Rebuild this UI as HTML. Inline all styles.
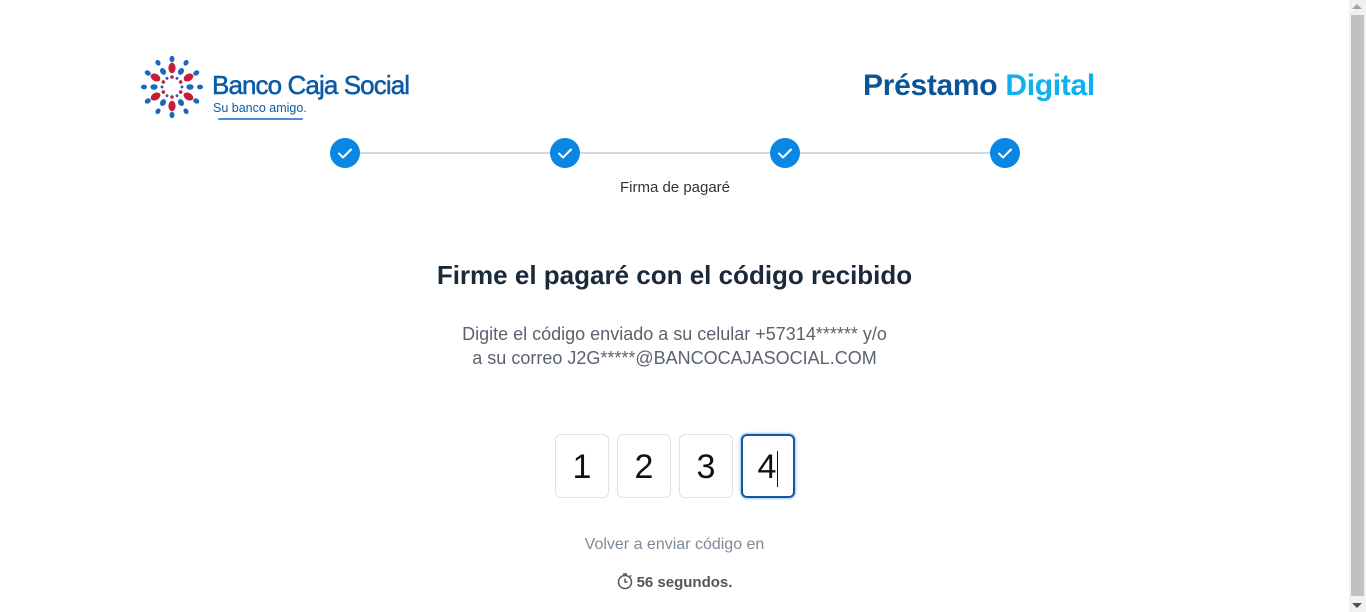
<!DOCTYPE html>
<html><head><meta charset="utf-8"><style>
*{margin:0;padding:0;box-sizing:border-box}
body{width:1366px;height:612px;background:#fff;font-family:"Liberation Sans",Roboto,sans-serif;position:relative;overflow:hidden}
.abs{position:absolute}
.sb{left:1349px;top:0;width:17px;height:612px;background:#f1f1f1}
.thumb{left:1351px;top:15px;width:13px;height:581px;background:#c1c1c1}
.step{width:30px;height:30px;border-radius:50%;background:#0a87e3;top:138px}
.line{top:152px;height:2px;background:#d5d8e2;left:360px;width:630px}
.c{text-align:center;width:1349px;left:0}
.box{top:434px;width:54px;height:64px;border:1px solid #dde2ea;border-radius:6px;font-size:34px;color:#111;text-align:center;line-height:64px}
</style></head><body>
<svg class="abs" style="left:136px;top:52px" width="72" height="70" viewBox="-36 -35 72 70">
<defs>
<g id="r"><ellipse cx="0" cy="-28" rx="2.5" ry="3.2" fill="#1a68c0"/><ellipse cx="0" cy="-19" rx="3.6" ry="5.2" fill="#c41f3a"/><circle cx="0" cy="-10" r="1.8" fill="#c41f3a"/></g>
<g id="b"><ellipse cx="0" cy="-28" rx="2.4" ry="3" fill="#1a68c0"/><ellipse cx="0" cy="-18" rx="2.8" ry="3.6" fill="#1a68c0"/><circle cx="0" cy="-10" r="1.5" fill="#1a68c0"/></g>
</defs>
<use href="#r"/><use href="#b" transform="rotate(30)"/><use href="#r" transform="rotate(60)"/><use href="#b" transform="rotate(90)"/><use href="#r" transform="rotate(120)"/><use href="#b" transform="rotate(150)"/><use href="#r" transform="rotate(180)"/><use href="#b" transform="rotate(210)"/><use href="#r" transform="rotate(240)"/><use href="#b" transform="rotate(270)"/><use href="#r" transform="rotate(300)"/><use href="#b" transform="rotate(330)"/>
</svg>
<div class="abs" style="left:212px;top:70px;font-size:26px;color:#0a5aa8;letter-spacing:-0.9px;-webkit-text-stroke:0.5px #0a5aa8">Banco Caja Social</div>
<div class="abs" style="left:213px;top:101px;font-size:12.5px;color:#0a5aa8">Su banco amigo.</div>
<div class="abs" style="left:218px;top:118px;width:85px;height:1.5px;background:#4a8fd6;border-radius:2px"></div>
<div class="abs" style="left:863px;top:69px;font-size:30px;font-weight:bold;color:#0a5597;letter-spacing:-0.3px">Préstamo <span style="color:#0db1f0">Digital</span></div>
<div class="abs line"></div>
<div class="abs step" style="left:330px"></div><div class="abs step" style="left:550px"></div><div class="abs step" style="left:770px"></div><div class="abs step" style="left:990px"></div>
<svg class="abs" style="left:0;top:0" width="1349" height="200">
<g fill="none" stroke="#fff" stroke-width="2" stroke-linecap="round" stroke-linejoin="round">
<path d="M339 153.5l4 4 8-8"/><path d="M559 153.5l4 4 8-8"/><path d="M779 153.5l4 4 8-8"/><path d="M999 153.5l4 4 8-8"/></g></svg>
<div class="abs" style="left:575px;top:179px;width:200px;text-align:center;font-size:15px;color:#333">Firma de pagaré</div>
<div class="abs c" style="top:260px;font-size:26px;font-weight:bold;color:#1b2a3a">Firme el pagaré con el código recibido</div>
<div class="abs c" style="top:322px;font-size:18px;color:#5a6270;line-height:24px">Digite el código enviado a su celular +57314****** y/o<br>a su correo J2G*****@BANCOCAJASOCIAL.COM</div>
<div class="abs box" style="left:555px">1</div>
<div class="abs box" style="left:617px">2</div>
<div class="abs box" style="left:679px">3</div>
<div class="abs box" style="left:741px;border:2px solid #1357a0;box-shadow:0 0 2px 1px #9cc4f2;line-height:62px">4<span style="display:inline-block;width:1px;height:36px;background:#111;vertical-align:middle;margin-left:1px"></span></div>
<div class="abs c" style="top:536px;font-size:16px;color:#7e8a96">Volver a enviar código en</div>
<div class="abs c" style="top:572px;font-size:15px;font-weight:bold;color:#555"><svg width="16" height="18" viewBox="0 0 16 18" style="vertical-align:-3px;margin-right:4px"><g fill="none" stroke="#555" stroke-width="1.5"><circle cx="8" cy="10" r="6.5"/><path d="M6 2h4M8 2v1.5M8 6.5V10h2.5M13 4.5l1.2-1.2"/></g></svg>56 segundos.</div>
<div class="abs sb"></div><div class="abs thumb"></div>
<div class="abs" style="left:1352px;top:4px;width:0;height:0;border-left:5px solid transparent;border-right:5px solid transparent;border-bottom:5px solid #a3a3a3"></div>
<div class="abs" style="left:1352px;top:603px;width:0;height:0;border-left:5px solid transparent;border-right:5px solid transparent;border-top:5px solid #505050"></div>
</body></html>
